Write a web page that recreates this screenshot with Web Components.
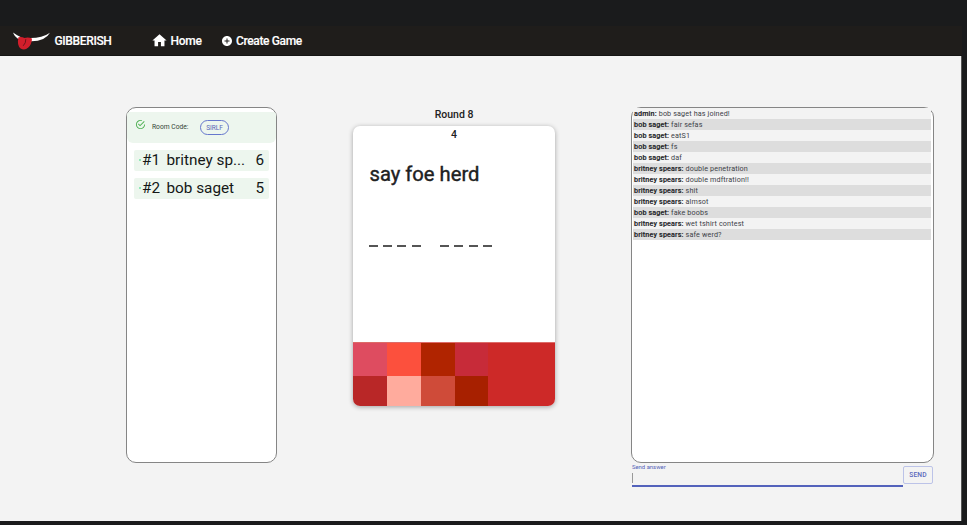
<!DOCTYPE html>
<html lang="en"><head><meta charset="utf-8"><title>Gibberish</title>
<style>
html,body{margin:0;width:967px;height:525px;overflow:hidden;background:#1a1b1c;font-family:Roboto,sans-serif;color:#202122}
</style></head><body>
<gibberish-app></gibberish-app>
<script>
const define=(name,html,setup)=>customElements.define(name,class extends HTMLElement{
  connectedCallback(){
    if(this.shadowRoot)return;
    const t=document.createElement('template');
    t.innerHTML=html;
    this.attachShadow({mode:'open'}).append(t.content.cloneNode(true));
    if(setup)setup(this,this.shadowRoot);
  }
});

define('nav-link',`<style>
:host{display:flex;flex:none;align-items:center;height:31px;color:#fff;font-size:12px;letter-spacing:-.36px;font-weight:500;line-height:16px;white-space:nowrap;-webkit-text-stroke:.15px #fff}
::slotted(svg){flex:none}
</style><slot name="icon"></slot><slot></slot>`);

define('nav-bar',`<style>
:host{display:flex;align-items:center;box-sizing:border-box;height:30px;width:962px;background:#1f1d1b;padding-left:12px;border-bottom:1px solid #151514}
.logo{width:39px;height:22px;margin-right:3.500px}
.brand{width:139px}.home{width:70px;letter-spacing:-.25px}
.hi{width:17px;height:17px;margin-right:2.500px}.ci{width:12px;height:12px;margin-right:3px}
</style>
<nav-link class="brand"><svg slot="icon" class="logo" viewBox="0 0 39 22">
<path d="M1 2.500Q5 5.400 9 7.300L8 9.600Q2.800 7.600 1 2.500Z" fill="#fff"/>
<path d="M18 8.100Q30 8.200 38 2.700Q33 11.500 18.500 11.200Z" fill="#fff"/>
<path d="M6.400 7.200Q9.700 6.400 12.500 8Q16 6.800 20 8.400Q19.800 14 16.300 17.600Q12.500 21 8.600 18.400Q4.700 15.500 6.400 7.200Z" fill="#d21e2b"/>
<path d="M13.800 9.200Q14 13 11.200 15.800" fill="none" stroke="#6d151b" stroke-width="1"/>
</svg>GIBBERISH</nav-link>
<nav-link class="home"><svg slot="icon" class="hi" viewBox="0 0 24 24" fill="#fff"><path d="M10 20v-6h4v6h5v-8h3L12 3 2 12h3v8z"/></svg>Home</nav-link>
<nav-link><svg slot="icon" class="ci" viewBox="0 0 24 24" fill="#fff"><path d="M12 2C6.480 2 2 6.480 2 12s4.480 10 10 10 10-4.480 10-10S17.520 2 12 2zm5 11h-4v4h-2v-4H7v-2h4V7h2v4h4v2z"/></svg>Create Game</nav-link>`);

define('player-row',`<style>
:host{display:flex;align-items:center;box-sizing:border-box;height:21px;margin:0 7px 7px;padding:0 5px;background:#edf6ee;border-radius:2px;font-size:15.300px;line-height:21px;color:#151817;white-space:nowrap}
i{width:2px;height:2px;border-radius:1px;background:#70e5a6;flex:none}
.rank{width:24.500px;margin-left:1px}.name{flex:1}
</style><i></i><span class="rank"><slot name="rank"></slot></span><span class="name"><slot></slot></span><span><slot name="score"></slot></span>`);

define('score-panel',`<style>
:host{display:block;box-sizing:border-box;width:151px;height:356px;padding-top:4px;border:1px solid #858585;border-radius:10px;background:#fff}
header{display:flex;align-items:center;box-sizing:border-box;height:31px;padding:0 0 0 8px;background:#edf6ee;border-radius:3px 3px 6px 6px;font-size:6.700px;color:#354638;margin-bottom:7px}
svg{width:11px;height:11px;margin:-5px 6px 0 0}
.label{width:48px}
.chip{box-sizing:border-box;width:29px;height:15px;border:1px solid #6677cd;border-radius:8px;text-align:center;font-size:6.500px;line-height:14px;color:#5967b8}
</style><header><svg viewBox="0 0 24 24" fill="#4caf50"><path d="M20 12a8 8 0 1 1-5.800-7.690l1.570-1.570A9.820 9.820 0 0 0 12 2a10 10 0 1 0 10 10M7.910 10.080L6.500 11.500 11 16 21 6l-1.410-1.420L11 13.170z"/></svg><span class="label">Room Code:</span><span class="chip">SIRLF</span></header>
<player-row><span slot="rank">#1</span>britney sp...<span slot="score">6</span></player-row>
<player-row><span slot="rank">#2</span>bob saget<span slot="score">5</span></player-row>`);

define('colour-mosaic',`<style>
:host{display:grid;grid-template:33px 30px / 34px 34px 33.500px 33px 1fr;height:63px;border-top:1px solid #dd6b68}
</style><b style="background:#de4c60"></b><b style="background:#fc503d"></b><b style="background:#b02400"></b><b style="background:#c72b39"></b><b style="background:#cd2928;grid-area:1/5/3/6"></b><b style="background:#b92727;grid-area:2/1"></b><b style="background:#ffab9d"></b><b style="background:#cf4b39"></b><b style="background:#a72000"></b>`);

define('round-card',`<style>
:host{display:block;width:202px}
h1{margin:0;height:19.500px;line-height:15px;font-size:10.500px;font-weight:500;text-align:center;color:#222}
article{display:flex;flex-direction:column;height:280px;background:#fff;border-radius:7px;overflow:hidden;box-shadow:0 1px 5px #0005}
.time{font-size:10.500px;font-weight:500;line-height:17px;text-align:center}
h2{margin:17px 0 0 16.500px;font-size:20.200px;line-height:28px;font-weight:400;-webkit-text-stroke:.4px #202122;color:#202122;white-space:nowrap}
.blanks{display:flex;gap:5.200px;margin:57px 0 0 16px}
.blanks i{width:9px;height:2px;background:#555}.blanks i:nth-child(5){margin-left:14.500px}
colour-mosaic{margin-top:auto}
</style><h1>Round 8</h1><article><div class="time">4</div><h2>say foe herd</h2><div class="blanks"><i></i><i></i><i></i><i></i><i></i><i></i><i></i><i></i></div><colour-mosaic></colour-mosaic></article>`);

define('chat-line',`<style>
:host{display:block;height:11.050px;line-height:11px;padding-left:1px;background:#f3f3f3;font-size:7.200px;letter-spacing:.14px;color:#3c4147;white-space:nowrap}
:host(:nth-child(even)){background:#ddd}
b{font-weight:500;color:#202124;-webkit-text-stroke:.15px #202124}
</style><b><slot name="who"></slot></b> <slot></slot>`);

define('chat-log',`<style>
:host{display:block;box-sizing:border-box;width:303px;height:356px;padding:0 2px 0 1px;border:1px solid #858585;border-radius:10px;background:#fff}
</style><div></div>`,(h,r)=>{
 const lines=[['admin:','bob saget has joined!'],['bob saget:','fair sefas'],['bob saget:','eatS1'],['bob saget:','fs'],['bob saget:','daf'],['britney spears:','double penetration'],['britney spears:','double mdftration!!'],['britney spears:','shit'],['britney spears:','almsot'],['bob saget:','fake boobs'],['britney spears:','wet tshirt contest'],['britney spears:','safe werd?']];
 for(const [who,text] of lines){const l=document.createElement('chat-line');const w=document.createElement('span');w.slot='who';w.textContent=who;l.append(w,text);r.querySelector('div').append(l);}
});

define('answer-form',`<style>
:host{display:flex;width:302px;height:24px}
.field{box-sizing:border-box;width:271px;height:24px;margin-left:1px;border-bottom:2px solid #5362bb}
label{display:block;height:10px;line-height:8px;font-size:5.900px;color:#5362b8}
.caret{width:1px;height:10px;background:#999}
.send{box-sizing:border-box;width:30px;height:18px;margin-top:3px;border:1px solid #bcc3e8;border-radius:2px;text-align:center;line-height:16px;font-size:6.700px;font-weight:500;color:#5968bc;letter-spacing:.1px}
</style><div class="field"><label>Send answer</label><div class="caret"></div></div><div class="send">SEND</div>`);

define('gibberish-app',`<style>
:host{display:block;padding-top:26px}
main{display:flex;align-items:flex-start;box-sizing:border-box;width:962px;height:465px;background:#f3f3f3;border-right:1px solid #555;padding:50.500px 0 0 126px}
score-panel,.chat{margin-top:.100px}
round-card{margin-left:76px}.chat{margin-left:76px}
</style><nav-bar></nav-bar><main><score-panel></score-panel><round-card></round-card><section class="chat"><chat-log></chat-log><answer-form></answer-form></section></main>`);
</script></body></html>
